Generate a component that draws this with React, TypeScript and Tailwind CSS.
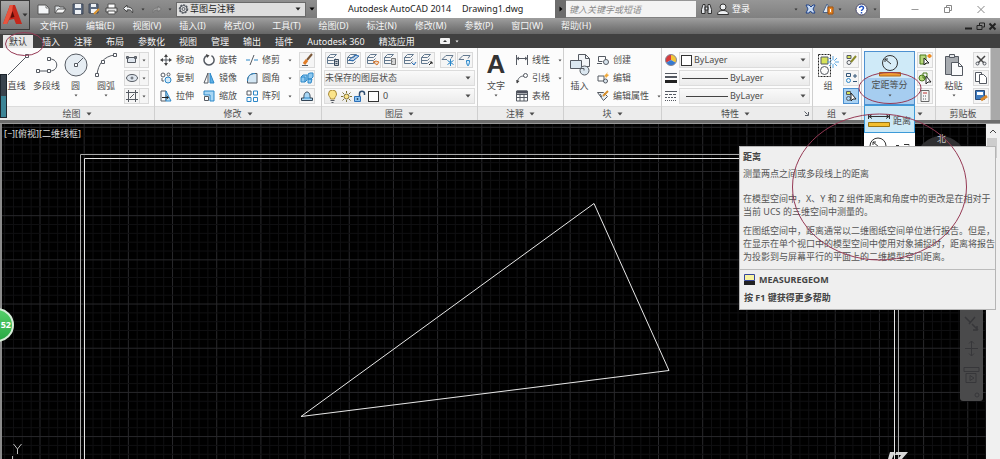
import type { ReactNode } from "react";

type IcProps = { w: number; h: number; children: ReactNode; className?: string };

const Ic = ({ w, h, children, className = "" }: IcProps) => (
  <svg
    width={w}
    height={h}
    viewBox={`0 0 ${w} ${h}`}
    fill="none"
    stroke="#555a62"
    strokeWidth="1"
    className={`shrink-0 ${className}`}
    aria-hidden="true"
  >
    {children}
  </svg>
);

const Arrow = ({ className = "" }: { className?: string }) => (
  <Ic w={6} h={4} className={className}>
    <path d="M0.5 0.5h5L3 3.5z" fill="currentColor" stroke="none" />
  </Ic>
);

const Dot = () => (
  <Ic w={4} h={3}>
    <path d="M0.5 0.5h3L2 2.5z" fill="currentColor" stroke="none" />
  </Ic>
);

/* ---------- title bar ---------- */

const quickTools = [
  {
    label: "新建",
    icon: (
      <Ic w={13} h={12}>
        <path d="M1 2h8l3 3v6H1z" fill="#f4f6f8" stroke="#555" />
        <path d="M9 2v3h3" stroke="#777" />
      </Ic>
    ),
  },
  {
    label: "打开",
    icon: (
      <Ic w={13} h={12}>
        <path d="M1 10V3h4l1 1h4v2" fill="#dfe3e6" stroke="#555" />
        <path d="M1 10l3-4h8l-3 4z" fill="#f8f8f8" stroke="#555" />
      </Ic>
    ),
  },
  {
    label: "保存",
    icon: (
      <Ic w={12} h={12}>
        <path d="M1 1h10v10H1z" fill="#5d6b80" stroke="#3e4654" />
        <path d="M3 1h6v4H3zM3 7h6v4H3z" fill="#eef1f5" stroke="none" />
      </Ic>
    ),
  },
  {
    label: "另存为",
    icon: (
      <Ic w={13} h={12}>
        <path d="M1 1h9v9H1z" fill="#5d6b80" stroke="#3e4654" />
        <path d="M3 1h5v3H3zM3 6h6v4H3z" fill="#eef1f5" stroke="none" />
        <path d="M6 11l5-5" stroke="#d9912c" strokeWidth="2" />
      </Ic>
    ),
  },
  {
    label: "打印",
    icon: (
      <Ic w={13} h={12}>
        <path d="M3 5V1h7v4" fill="#fff" stroke="#555" />
        <path d="M1 5h11v4H1z" fill="#e3e3e3" stroke="#444" />
        <path d="M3 8h7v3H3z" fill="#fff" stroke="#555" />
      </Ic>
    ),
  },
  {
    label: "放弃",
    icon: (
      <Ic w={13} h={12}>
        <path d="M5 2L1.500 5.500 5 9V7c3-.5 4.500 0 5.500 3 1-3.500-1-6-5.500-6z" fill="#eceef0" stroke="#444" />
      </Ic>
    ),
  },
];

const TitleBar = () => (
  <div className="flex h-[18px] items-stretch bg-white">
    <div className="flex w-[287px] shrink-0 items-center bg-gradient-to-b from-[#8f8f8f] to-[#7b7b7b] pl-[5px] text-[#333]">
      {quickTools.map((t) => (
        <button key={t.label} aria-label={t.label} className="flex w-[17px] justify-center">
          {t.icon}
        </button>
      ))}
      <button aria-label="放弃列表" className="flex w-3 justify-center"><Dot /></button>
      <button aria-label="重做" className="flex w-[15px] justify-center">
        <Ic w={12} h={12}>
          <path d="M7 3l3.500 3L7 9V7C4 7 3 7.500 2 10c-.500-3.500 1-5 5-5z" fill="#a7a7a7" stroke="#777" />
        </Ic>
      </button>
      <button aria-label="重做列表" className="flex w-3 justify-center"><Dot /></button>
      <label className="flex h-[15px] w-[130px] items-center border border-[#6a6a6a] bg-[#dedede] pr-1 pl-px text-[#222]">
        <Ic w={11} h={12}>
          <circle cx="5.500" cy="6" r="4" strokeDasharray="2 1" strokeWidth="1.500" />
          <circle cx="5.500" cy="6" r="3.500" />
          <circle cx="5.500" cy="6" r="1.500" />
        </Ic>
        <select aria-label="工作空间" className="ml-px flex-1 appearance-none bg-transparent leading-3 outline-none">
          <option>草图与注释</option>
        </select>
        <Arrow />
      </label>
      <button aria-label="自定义快速访问工具栏" className="flex flex-1 justify-center text-black"><Arrow /></button>
    </div>
    <h1 className="flex w-[238px] flex-auto items-center gap-[11px] pl-[31px] leading-[18px] whitespace-pre text-[#222]">
      <span>Autodesk AutoCAD 2014</span>
      <span>Drawing1.dwg</span>
    </h1>
    <div className="flex w-[325px] shrink-0 items-center bg-gradient-to-b from-[#969696] to-[#808080] text-[#333]">
      <button aria-label="展开搜索" className="flex h-full w-[11px] items-center justify-center bg-[#6c6c6c]">
        <Ic w={4} h={6}><path d="M0.500 0.500v5L3.500 3z" fill="#000" stroke="none" /></Ic>
      </button>
      <input
        aria-label="搜索"
        placeholder="键入关键字或短语"
        className="h-[16px] w-[130px] bg-[#f3f3f3] pl-[3px] italic outline-none placeholder:text-[#888]"
      />
      <button aria-label="查找" className="ml-[4px] flex">
        <Ic w={13} h={12}>
          <path d="M1.500 10.500v-4l1.500-5h2v9zM11.500 10.500v-4l-1.500-5H8v9zM5 4h3v3H5z" fill="#e3e6ea" stroke="#333" />
        </Ic>
      </button>
      <button className="ml-[4px] flex items-center gap-[3px] leading-4 text-white">
        <Ic w={12} h={12}>
          <circle cx="6" cy="4" r="3" fill="#eef0f2" stroke="#333" />
          <path d="M0.500 11.500c0-3 2.500-4 5.500-4s5.500 1 5.500 4z" fill="#eef0f2" stroke="#333" />
        </Ic>
        登录
      </button>
      <span className="ml-[44px]"><Dot /></span>
      <button aria-label="Exchange" className="ml-[7px] flex">
        <Ic w={11} h={10}>
          <path d="M1 1h3l2 2 2-2h2L8 5l2 4H7L5.500 7 4 9H1l2-4z" fill="#c9dcf5" stroke="#22448a" />
        </Ic>
      </button>
      <button aria-label="保持连接" className="ml-[6px] flex items-center gap-[3px]">
        <Ic w={13} h={12}>
          <path d="M1 9.500h5v-7L5 1 1 9.500z" fill="#dfe8f3" stroke="#4b6488" />
          <path d="M6 4h5v7H6z" fill="#e78524" stroke="#a0500b" />
          <path d="M8.500 6v3" stroke="#fff" />
        </Ic>
        <Dot />
      </button>
      <button aria-label="帮助" className="ml-[13px] flex items-center gap-[5px]">
        <Ic w={13} h={13}>
          <circle cx="6.500" cy="6.500" r="5.500" fill="#fff" stroke="#446" />
          <path d="M4.500 5c0-2.500 4-2.500 4 0 0 1.500-2 1.500-2 3M6.500 9v1.500" stroke="#1d4fc0" strokeWidth="1.500" />
        </Ic>
        <Dot />
      </button>
    </div>
    <div className="flex w-[120px] shrink-0 items-center justify-end gap-[23px] pr-[14px]">
      <button aria-label="最小化"><Ic w={10} h={9}><path d="M1.500 4.500h7" stroke="#999" /></Ic></button>
      <button aria-label="向下还原">
        <Ic w={10} h={9}><path d="M1.500 2.500h5v5h-5zM3.500 2.500v-2h5v5h-2" stroke="#888" /></Ic>
      </button>
      <button aria-label="关闭"><Ic w={10} h={9}><path d="M1.500 1l7 7M8.500 1l-7 7" stroke="#888" /></Ic></button>
    </div>
  </div>
);

const menus = [
  "文件(F)", "编辑(E)", "视图(V)", "插入(I)", "格式(O)", "工具(T)",
  "绘图(D)", "标注(N)", "修改(M)", "参数(P)", "窗口(W)", "帮助(H)",
];

const MenuBar = () => (
  <nav className="flex h-[16px] items-center justify-between pr-[3px] pl-[10px] text-[#f4f4f4]">
    <div className="flex gap-[18px] leading-4">
      {menus.map((m) => (
        <button key={m}>{m}</button>
      ))}
    </div>
    <div className="flex gap-[3px]">
      <button aria-label="最小化图形"><Ic w={9} h={9}><path d="M1 6.500h7" stroke="#222" strokeWidth="2" /></Ic></button>
      <button aria-label="还原图形">
        <Ic w={9} h={9}><path d="M1 3.500h5v4H1zM3.500 3V1h5v4H6.500" stroke="#222" /></Ic>
      </button>
      <button aria-label="关闭图形"><Ic w={9} h={9}><path d="M1.500 1.500l6 6M7.500 1.500l-6 6" stroke="#222" strokeWidth="2" /></Ic></button>
    </div>
  </nav>
);

const tabs = ["插入", "注释", "布局", "参数化", "视图", "管理", "输出", "插件", "Autodesk 360", "精选应用"];

const TabBar = () => (
  <div role="tablist" className="flex h-[14px] items-end bg-[#404040] pl-[3px] leading-[13px] text-[#f2f2f2]">
    <button role="tab" aria-selected="true" className="h-[13px] w-[30px] bg-[#e6e6e6] text-[#333]">
      默认
    </button>
    <div className="ml-[9px] flex gap-[14px]">
      {tabs.map((t) => (
        <button key={t} role="tab" aria-selected="false" className="whitespace-nowrap">
          {t}
        </button>
      ))}
    </div>
    <button aria-label="最小化选项卡" className="mb-[4px] ml-[25px] flex items-center gap-[5px]">
      <Ic w={10} h={6}>
        <rect width="10" height="6" rx="1" fill="#f2f2f2" stroke="none" />
        <path d="M3 4h4L5 2z" fill="#333" stroke="none" />
      </Ic>
      <Dot />
    </button>
  </div>
);

/* ---------- ribbon building blocks ---------- */

type PanelProps = { title?: string; label?: string; children: ReactNode; arrow?: boolean; launcher?: boolean };

const Panel = ({ title, label, children, arrow = true, launcher = false }: PanelProps) => (
  <section aria-label={label ?? title} className="flex min-w-0 flex-col border-r border-[#cfcfcf] bg-[#fcfcfc]">
    <div className="flex h-[58px] pt-[3px]">{children}</div>
    <div
      className={`flex h-[14px] items-center gap-[5px] border-t border-[#dcdcdc] bg-[#ececec] leading-3 ${
        title ? "justify-center" : "justify-end pr-[12px]"
      }`}
    >
      {launcher && <span className="flex-1" />}
      {title}
      {arrow && <Arrow />}
      {launcher && (
        <span className="flex flex-1 justify-end pr-[3px]">
          <Ic w={5} h={5}><path d="M0.500 0.500l3 3M4.500 1v3.500H1" /></Ic>
        </span>
      )}
    </div>
  </section>
);

type BigProps = { label: string; icon: ReactNode; arrow?: boolean; className: string };

const BigButton = ({ label, icon, arrow = false, className }: BigProps) => (
  <button className={`flex shrink-0 flex-col items-center ${className}`}>
    <span className="flex h-[27px] items-center">{icon}</span>
    <span className="leading-4 whitespace-nowrap">{label}</span>
    {arrow && <Dot />}
  </button>
);

type RowProps = { label: string; icon: ReactNode; arrow?: boolean };

const RowButton = ({ label, icon, arrow = false }: RowProps) => (
  <button className="flex h-[18px] items-center gap-1 whitespace-nowrap">
    {icon}
    {label}
    {arrow && <span className="ml-[4px]"><Dot /></span>}
  </button>
);

const SmallButton = ({ label, children, active = false }: { label: string; children: ReactNode; active?: boolean }) => (
  <button
    aria-label={label}
    className={`flex h-4 w-4 shrink-0 items-center justify-center border ${
      active ? "border-[#4d90d0] bg-[#a9d2f3]" : "border-[#dadada] bg-[#f5f5f5]"
    }`}
  >
    {children}
  </button>
);

const Column = ({ children, className = "" }: { children: ReactNode; className?: string }) => (
  <div className={`flex shrink-0 flex-col ${className}`}>{children}</div>
);

/* ---------- panels ---------- */

const shapes = [
  { label: "矩形", d: "M2.500 4.500h8v5h-8zM1.500 3.500h2v2h-2zM9.500 3.500h2v2h-2z" },
  { label: "椭圆", d: "M1.500 7a5.500 3.500 0 1 0 11 0a5.500 3.500 0 1 0-11 0M5.500 7h3M7 5.500v3" },
  { label: "图案填充", d: "M3.500 1v12M10.500 1v12M1 3.500h12M1 10.500h12M5 9l4-4" },
];

const DrawPanel = () => (
  <Panel title="绘图">
    <BigButton
      className="w-[33px]"
      label="直线"
      icon={<Ic w={24} h={24}><path d="M3 22L21 4" /><path d="M20.500 1.500h3v3h-3z" fill="#fff" /></Ic>}
    />
    <BigButton
      className="w-[27px]"
      label="多段线"
      icon={
        <Ic w={24} h={22}>
          <path d="M3 17h12c9 0 9-12 0-12" />
          <path d="M1.500 15.500h3v3h-3zM12.500 15.500h3v3h-3zM12.500 3.500h3v3h-3z" fill="#fff" />
        </Ic>
      }
    />
    <BigButton
      className="w-[31px]"
      label="圆"
      arrow
      icon={
        <Ic w={24} h={24}>
          <circle cx="12" cy="12" r="11" fill="#e6edf3" />
          <path d="M12 12l7-7" />
          <path d="M10.500 10.500h3v3h-3z" fill="#fff" />
        </Ic>
      }
    />
    <BigButton
      className="w-[30px]"
      label="圆弧"
      arrow
      icon={
        <Ic w={22} h={24}>
          <path d="M2 22C3 11 9 3 20 2" />
          <path d="M0.500 20.500h3v3h-3zM6.500 7.500h3v3h-3zM18.500 0.500h3v3h-3z" fill="#fff" />
        </Ic>
      }
    />
    <Column className="ml-[3px] gap-[2px] pt-px">
      {shapes.map((s) => (
        <div key={s.label} className="flex">
          <SmallButton label={s.label}>
            <Ic w={14} h={14}><path d={s.d} fill="#dfe6ee" /></Ic>
          </SmallButton>
          <button aria-label={`${s.label}选项`} className="flex w-[9px] items-center justify-center border border-l-0 border-[#dadada] bg-[#f5f5f5]">
            <Dot />
          </button>
        </div>
      ))}
    </Column>
  </Panel>
);

const ModifyPanel = () => (
  <Panel title="修改">
    <Column className="ml-[5px] w-[43px]">
      <RowButton label="移动" icon={<Ic w={12} h={12}><path d="M6 1v10M1 6h10" /><path d="M6 0l2 3H4zM6 12l2-3H4zM0 6l3-2v4zM12 6L9 4v4z" fill="#444" stroke="none" /></Ic>} />
      <RowButton label="复制" icon={<Ic w={12} h={12}><circle cx="3" cy="3" r="2" /><circle cx="8.500" cy="2.500" r="1.500" /><circle cx="8" cy="8" r="3" stroke="#2b87c8" fill="#d3eafa" /><path d="M2 6v3h2" /></Ic>} />
      <RowButton label="拉伸" icon={<Ic w={12} h={12}><path d="M1 1h5v10H1z" /><path d="M6 1l5 10H6z" fill="#bfe0f5" stroke="#2b87c8" /><path d="M2 7.500h6M6.500 6l2 1.500-2 1.500" stroke="#222" /></Ic>} />
    </Column>
    <Column className="w-[43px]">
      <RowButton label="旋转" icon={<Ic w={12} h={12}><path d="M4 1.500a5 5 0 1 0 4.500 0.200" strokeWidth="1.500" /><path d="M3 0l3.500 1.500L4 4z" fill="#444" stroke="none" /></Ic>} />
      <RowButton label="镜像" icon={<Ic w={12} h={12}><path d="M5 1v10H1z" /><path d="M7 1v10h4z" fill="#5eb1e6" stroke="#2b87c8" /></Ic>} />
      <RowButton label="缩放" icon={<Ic w={12} h={12}><path d="M1 1h10v10H7V5H1z" fill="#a8d6f4" stroke="#2b87c8" /><path d="M1.500 6.500h4v4h-4z" /></Ic>} />
    </Column>
    <Column className="w-[53px]">
      <RowButton arrow label="修剪" icon={<Ic w={12} h={12}><path d="M0 6h4M8 6h4" stroke="#2b87c8" /><path d="M4 11l4-10" /></Ic>} />
      <RowButton arrow label="圆角" icon={<Ic w={12} h={12}><path d="M1.500 11V9c0-5 3-7.500 7.500-7.500h2V11z" fill="#d4e7f4" /><path d="M1.500 9C1.500 4 4 1.500 9 1.500" stroke="#2b87c8" /></Ic>} />
      <RowButton arrow label="阵列" icon={<Ic w={12} h={12}><path d="M1 1h4v4H1z" /><path d="M7.500 1h4v4h-4zM1 7.500h4v4H1zM7.500 7.500h4v4h-4z" stroke="#2b87c8" /></Ic>} />
    </Column>
    <Column className="gap-[2px] pt-px">
      <SmallButton label="删除"><Ic w={14} h={14}><path d="M12 1L7 7" stroke="#7a5636" strokeWidth="2" /><path d="M7 7l-3 4" stroke="#e07c26" strokeWidth="3" /><path d="M2 12.500h6" /></Ic></SmallButton>
      <SmallButton label="分解"><Ic w={14} h={14}><path d="M1 6l2-2h4v5l-2 2H1zM1 6h4v5M8 3l2-1h3v4l-2 2H8zM8 8h4l-1 4H8z" stroke="#2b87c8" fill="#8fc9f0" /></Ic></SmallButton>
      <SmallButton label="偏移"><Ic w={14} h={14}><path d="M1.500 11.500h11V9H10C11 1 3 1 4 9H1.500z" fill="#a8d6f4" stroke="#345" /><path d="M4 9h6" stroke="#2b87c8" /></Ic></SmallButton>
    </Column>
  </Panel>
);

const layerTools = [
  { label: "图层特性", extra: "M8.500 6.500h4v6h-4zM9.500 8.500h2M9.500 10.500h2", color: "#3b4c5e", gap: "" },
  { label: "图层置为当前", extra: "M3 7l6-5 4 1-6 5z", color: "#2b6fb8", gap: "ml-[4px]" },
  { label: "匹配图层", extra: "M7 9l4 3 2-3-3-1z", color: "#d9772a", gap: "ml-[4px]" },
  { label: "上一个", extra: "M8.500 5.500h4v6h-4z", color: "#777777", gap: "ml-px" },
  { label: "隔离", extra: "M9 10l2 2 2-3", color: "#2b6fb8", gap: "ml-[4px]" },
  { label: "取消隔离", extra: "M9 12l3-3M10 9h2v2", color: "#222222", gap: "ml-px" },
];

/* freeze / turn off: a single sheet with a blue mark under it */
const layerStates = [
  { label: "冻结", extra: "M9.500 6v7M6.500 7.500l6 4M12.500 7.500l-6 4", gap: "ml-[5px]" },
  { label: "关闭图层", extra: "M8.500 7.500h3v2l-1 3h-1l-1-3z", gap: "ml-px" },
];

const comboBox = "flex h-4 items-center border border-[#dcdcdc] bg-gradient-to-b from-[#fafafa] to-[#ebebeb] pr-[3px]";
const comboSelect = "min-w-0 flex-1 appearance-none bg-transparent leading-3 outline-none";

const LayerPanel = () => (
  <Panel title="图层">
    <Column className="w-full flex-1 gap-[2px] px-[2px] pt-px">
      <div className="flex pl-px">
        {layerTools.map((t) => (
          <div key={t.label} className={t.gap}>
            <SmallButton label={t.label}>
              <Ic w={14} h={14}>
                <path d="M1.500 4.500l3-3h6l-3 3zM1.500 7.500h6l2-2M1.500 10.500h6l2-2M1.500 4.500v6" stroke="#62788e" />
                <path d={t.extra} stroke={t.color} fill={t.color} fillOpacity="0.250" />
              </Ic>
            </SmallButton>
          </div>
        ))}
        {layerStates.map((t) => (
          <div key={t.label} className={t.gap}>
            <SmallButton label={t.label}>
              <Ic w={14} h={14}>
                <path d="M1 6.500l4-4h7l-2 3M1 6.500h5" stroke="#62788e" />
                <path d={t.extra} stroke="#2b87c8" fill="#cfe8fa" />
              </Ic>
            </SmallButton>
          </div>
        ))}
      </div>
      <div className={comboBox}>
        <select aria-label="图层状态" className={comboSelect}>
          <option>未保存的图层状态</option>
        </select>
        <Arrow />
      </div>
      <div className={comboBox}>
        <Ic w={13} h={13} className="ml-px">
          <path d="M4.500 9c0-2-2-2.500-2-5a4 4 0 0 1 8 0c0 2.500-2 3-2 5z" fill="#fbe48a" stroke="#a98a3a" />
          <path d="M4.500 10.500h4M5.500 12.500h2" />
        </Ic>
        <Ic w={13} h={13} className="ml-px">
          <circle cx="6.500" cy="6.500" r="2.500" fill="#fbe48a" stroke="#7d7236" />
          <path d="M6.500 1v2M6.500 10v2M1 6.500h2M10 6.500h2M2.500 2.500L4 4M9 9l1.500 1.500M10.500 2.500L9 4M4 9l-1.500 1.500" stroke="#7d7236" />
        </Ic>
        <Ic w={13} h={13}>
          <path d="M1.500 6.500h6v5h-6z" fill="#8cc3ee" stroke="#2b6fb8" />
          <path d="M6.500 6V3.500c0-3 5-3 5 0V5M4.500 8v2" stroke="#2f4d70" strokeWidth="1.500" />
        </Ic>
        <span className="ml-[2px] size-[11px] shrink-0 border border-[#333] bg-white" />
        <select aria-label="图层" className={`${comboSelect} ml-[4px]`}>
          <option>0</option>
        </select>
        <Arrow />
      </div>
    </Column>
  </Panel>
);

const AnnotatePanel = () => (
  <Panel title="注释">
    <BigButton
      className="w-[36px]"
      label="文字"
      arrow
      icon={
        <span className="[font-family:'Liberation_Sans',sans-serif] text-[26px] leading-[27px] font-bold text-[#333]">A</span>
      }
    />
    <Column className="ml-[2px]">
      <RowButton arrow label="线性" icon={<Ic w={12} h={12}><path d="M0.500 1v10M11.500 1v10M1 4.500h10M3 3L1 4.500 3 6M9 3l2 1.500L9 6" /></Ic>} />
      <RowButton arrow label="引线" icon={<Ic w={12} h={12}><path d="M1 11c1-5 3-7 7-7" /><circle cx="9.500" cy="3.500" r="2" /><path d="M0 8l1 3.500L3.500 9z" fill="#444" stroke="none" /></Ic>} />
      <RowButton label="表格" icon={<Ic w={12} h={12}><path d="M0.500 1h11v10H0.500zM0.500 4.500h11M0.500 7.500h11M4 4v7M8 4v7" /><path d="M1 1h10v2H1z" fill="#445" /></Ic>} />
    </Column>
  </Panel>
);

const BlockPanel = () => (
  <Panel title="块">
    <BigButton
      className="w-[31px]"
      label="插入"
      icon={
        <Ic w={22} h={24}>
          <path d="M9.500 1.500h7l4 4v8h-11z" fill="#f2f5f8" />
          <path d="M16.500 1.500v4h4" />
          <path d="M1.500 7.500h11v8h-11z" fill="#dbe7f0" />
          <circle cx="15.500" cy="17.500" r="4.500" fill="#dbe7f0" />
          <path d="M10 15.500h5v2" />
        </Ic>
      }
    />
    <Column className="ml-[2px]">
      <RowButton label="创建" icon={<Ic w={12} h={12}><path d="M1.500 7.500v-5h7v3M1.500 7.500h4" /><circle cx="9" cy="8" r="2.500" fill="#dbe7f0" /><path d="M0 9.500h5" /></Ic>} />
      <RowButton label="编辑" icon={<Ic w={12} h={12}><path d="M1 4h6v5H1z" /><circle cx="8.500" cy="9" r="2" fill="#dbe7f0" /><path d="M11 0L7 4l2 1-1 2 4-4-2-1z" fill="#f0a838" stroke="none" /></Ic>} />
      <RowButton arrow label="编辑属性" icon={<Ic w={12} h={12}><path d="M0.500 2.500h6l4 4-4 4z" fill="#e8eef3" /><path d="M11 1L6 6" stroke="#d9912c" strokeWidth="2" /><path d="M3 4l2 3" /></Ic>} />
    </Column>
  </Panel>
);

const PropertiesPanel = () => (
  <Panel title="特性" launcher>
    <Column className="w-full flex-1 gap-[2px] pr-[2px] pl-[3px] pt-px">
      <div className="flex items-center gap-[2px]">
        <Ic w={12} h={12}>
          <path d="M6 6V0.500A5.500 5.500 0 0 0 1.200 8.700z" fill="#d83a3a" stroke="none" />
          <path d="M6 6V0.500a5.500 5.500 0 0 1 4.800 8.200z" fill="#f2c536" stroke="none" />
          <path d="M6 6L1.200 8.700a5.500 5.500 0 0 0 9.600 0z" fill="#3579d0" stroke="none" />
          <circle cx="6" cy="6" r="5.500" stroke="#889" />
        </Ic>
        <div className={`${comboBox} flex-1`}>
          <span className="ml-px size-[11px] shrink-0 border border-[#333] bg-white" />
          <select aria-label="对象颜色" className={`${comboSelect} ml-[2px]`}>
            <option>ByLayer</option>
          </select>
          <Arrow />
        </div>
      </div>
      <div className="flex items-center gap-[2px]">
        <Ic w={12} h={12}><path d="M0 1.500h12" /><path d="M0 5h12" strokeWidth="2" /><path d="M0 9.500h12" stroke="#222" strokeWidth="3" /></Ic>
        <div className={`${comboBox} flex-1`}>
          <span className="ml-[2px] h-px w-[46px] shrink-0 bg-[#444]" />
          <select aria-label="线宽" className={`${comboSelect} ml-[2px]`}>
            <option>ByLayer</option>
          </select>
          <Arrow />
        </div>
      </div>
      <div className="flex items-center gap-[2px]">
        <Ic w={12} h={12}><path d="M0 1.500h12" /><path d="M0 4.500h12" strokeDasharray="3 1" /><path d="M0 7.500h12" strokeDasharray="2 1" /><path d="M0 10.500h12" strokeDasharray="1 1" /></Ic>
        <div className={`${comboBox} flex-1`}>
          <span className="ml-[6px] h-px w-[42px] shrink-0 bg-[#444]" />
          <select aria-label="线型" className={`${comboSelect} ml-[2px]`}>
            <option>ByLayer</option>
          </select>
          <Arrow />
        </div>
      </div>
    </Column>
  </Panel>
);

const GroupPanel = () => (
  <Panel title="组">
    <BigButton
      className="w-[30px]"
      label="组"
      icon={
        <Ic w={24} h={24}>
          <path d="M2.500 1.500h12v22h-12z" strokeDasharray="2 1" stroke="#222" />
          <path d="M5 4h7v7H5z" fill="#d6e25a" />
          <circle cx="8.500" cy="17.500" r="4" />
          <path d="M17 3v12M11 9h12M13 5l8 8M21 5l-8 8" stroke="#5aa6e0" />
          <circle cx="17" cy="9" r="2" fill="#fff" stroke="none" />
        </Ic>
      }
    />
    <Column className="gap-[2px] pt-px">
      <SmallButton label="解除编组"><Ic w={14} h={14}><path d="M3 2.500h4v3H3z" fill="#d6e25a" /><circle cx="5" cy="9.500" r="2" /><path d="M12 3L7 9" stroke="#8a8a2a" strokeWidth="2" /></Ic></SmallButton>
      <SmallButton label="组编辑"><Ic w={14} h={14}><path d="M2.500 2.500h4v3h-4zM9 5h4M11 3v4M9 10.500h4" stroke="#357" /><circle cx="4.500" cy="9.500" r="2" stroke="#2b87c8" /></Ic></SmallButton>
      <SmallButton label="启用组选择" active><Ic w={14} h={14}><path d="M2.500 2.500h4v3h-4z" fill="#d6e25a" /><circle cx="4.500" cy="9.500" r="2" /><path d="M7 4v8l2-2h3z" fill="#fff" stroke="#222" /></Ic></SmallButton>
    </Column>
  </Panel>
);

const UtilitiesPanel = () => (
  <Panel label="实用工具">
    <div className="relative ml-[2px] w-[51px] shrink-0">
      <button className="flex h-[54px] w-full flex-col items-center border border-[#4d90d0] bg-gradient-to-b from-[#cfeaf8] from-50% to-[#a6cdf0] to-50%">
        <span className="flex h-[25px] items-end">
          <Ic w={22} h={23}>
            <circle cx="11" cy="9" r="7.500" fill="#d8edf8" stroke="#333" />
            <path d="M12 10L6 5M6 8V5h3" stroke="#333" />
            <path d="M0.500 18.500h21v3.500h-21z" fill="#ee9b32" stroke="#b76a14" />
          </Ic>
        </span>
        <span className="leading-4">定距等分</span>
        <span className="mt-px"><Dot /></span>
      </button>
      <ul className="absolute top-[54px] left-0 z-10 h-[41px] w-full overflow-hidden bg-white">
        <li>
          <button className="flex h-[28px] w-full items-center gap-[3px] border border-[#3c9ad8] bg-[#cbe8f6] pt-[3px] pl-[3px] whitespace-nowrap">
            <Ic w={22} h={16}>
              <path d="M0.500 1v5M21.500 1v5M1 3.500h20M4 1.500L1 3.500l3 2M18 1.500l3 2-3 2" stroke="#333" />
              <path d="M0.500 9.500h21v4h-21z" fill="#f3bf2f" stroke="#9a7412" />
            </Ic>
            距离
          </button>
        </li>
        <li>
          <button aria-label="半径" className="flex w-full pt-[4px] pl-[5px]">
            <Ic w={44} h={18}>
              <circle cx="9" cy="9" r="8" stroke="#333" />
              <path d="M10 10L4 5M4 8V5h3" stroke="#333" />
              <path d="M27 8.500h3M35 7.500h5v1" stroke="#333" />
            </Ic>
          </button>
        </li>
      </ul>
    </div>
    <Column className="ml-[2px] gap-[2px] pt-px">
      <SmallButton label="快速选择"><Ic w={14} h={14}><path d="M2 2h6v9H2z" fill="#b6d77a" stroke="#4d7a1d" /><path d="M6 5v7l2-2h3z" fill="#fff" stroke="#222" /><path d="M11.500 1v4M9.500 3h4" stroke="#ee8a20" strokeWidth="2" /></Ic></SmallButton>
      <SmallButton label="全部选择"><Ic w={14} h={14}><circle cx="4" cy="7" r="3" fill="#b6d77a" stroke="#4d7a1d" /><path d="M5 2h4v5H5z" stroke="#4d7a1d" /><path d="M8 5v8l2-2h3z" fill="#fff" stroke="#222" /></Ic></SmallButton>
      <SmallButton label="快速计算器"><Ic w={14} h={14}><path d="M3 1.500h8v11H3z" fill="#f5f5f5" stroke="#666" /><path d="M5 4h4" stroke="#b33" /><path d="M5 7h4M5 10h4" strokeDasharray="1 1" /></Ic></SmallButton>
    </Column>
  </Panel>
);

const ClipboardPanel = () => (
  <Panel title="剪贴板" arrow={false}>
    <BigButton
      className="w-[35px]"
      label="粘贴"
      arrow
      icon={
        <Ic w={22} h={24}>
          <path d="M2.500 3.500h13v18h-13z" fill="#a7abb0" />
          <path d="M6.500 1.500h5v3h-5z" fill="#e2e5e8" />
          <path d="M8.500 9.500h7l4 4v9h-11z" fill="#fafbfc" />
          <path d="M15.500 9.500v4h4" />
        </Ic>
      }
    />
    <Column className="ml-[2px] gap-[2px] pt-px">
      <SmallButton label="剪切"><Ic w={14} h={14}><path d="M3 3l7 7M11 3l-7 7" stroke="#444" strokeWidth="1.500" /><circle cx="3.500" cy="10.500" r="1.500" /><circle cx="10.500" cy="10.500" r="1.500" /></Ic></SmallButton>
      <SmallButton label="复制剪裁"><Ic w={14} h={14}><path d="M1.500 1.500h6v9h-6z" fill="#fff" /><path d="M5.500 3.500h4l3 3v6h-7z" fill="#fff" /></Ic></SmallButton>
      <SmallButton label="特性匹配"><Ic w={14} h={14}><path d="M1.500 1.500h9v9h-9z" fill="#3f7cc0" stroke="#2a4a78" /><path d="M3 3h6v3H3z" fill="#fff" stroke="none" /><path d="M7 11l6-4" stroke="#d8862a" strokeWidth="3" /></Ic></SmallButton>
    </Column>
  </Panel>
);

const Ribbon = () => (
  <div className="grid h-[72px] grid-cols-[155fr_167fr_156fr_86fr_98fr_151fr_49fr_74fr_55fr_9px] text-[#4c4c4c]">
    <DrawPanel />
    <ModifyPanel />
    <LayerPanel />
    <AnnotatePanel />
    <BlockPanel />
    <PropertiesPanel />
    <GroupPanel />
    <UtilitiesPanel />
    <ClipboardPanel />
    <div className="bg-[#a9a9a9]" />
  </div>
);

/* ---------- drawing area ---------- */

const STEP = 44.18;

const gridLines = (count: number, start: number) =>
  Array.from({ length: count }, (_, i) => ({ pos: start + (i * STEP) / 5, major: i % 5 === 0 }));

const columns = gridLines(125, 40 - STEP);
const rows = gridLines(60, 47.500 - STEP);

const Drawing = () => (
  <svg
    role="img"
    aria-label="图形"
    viewBox="2 0 984 335"
    preserveAspectRatio="xMinYMin slice"
    className="absolute inset-0 h-full w-full"
    fill="none"
  >
    {columns.map((c) => (
      <path key={c.pos} d={`M${c.pos} 0v335`} stroke={c.major ? "#29292c" : "#101012"} />
    ))}
    {rows.map((r) => (
      <path key={r.pos} d={`M0 ${r.pos}h986`} stroke={r.major ? "#29292c" : "#101012"} />
    ))}
    <path d="M80.500 335V30.500h818V335" stroke="#a8a8a8" />
    <path d="M84.500 335V34.500h810V335" stroke="#e6e6e6" />
    <path d="M594 79.500l75 167-368 46z" stroke="#e8e8e8" />
    <path d="M13.500 320l4 5 4-5M17.500 325v5M12.500 332v3" stroke="#bdbdbd" />
    <circle cx="941" cy="37" r="25" fill="#303032" />
    <path d="M890 328h5l-3 7h-4zM896 328h12l-6 7h-4l3-4h-6z" fill="#d8d8d8" />
  </svg>
);

const NavBar = () => (
  <div className="absolute top-[60px] right-[17px] flex h-[217px] w-[23px] flex-col items-center justify-end gap-[9px] rounded-[3px] bg-[#4a4a4b] pb-[3px]">
    <Ic w={15} h={15}><path d="M1 1l5 5M11 1L5 8M8 8l6 6M13 10v4H9" stroke="#37373a" strokeWidth="1.500" /></Ic>
    <Ic w={15} h={17}><path d="M7.500 1v15M1 8.500h13M5 3.500L7.500 1 10 3.500M5 13.500l2.500 2.500 2.500-2.500" stroke="#37373a" /></Ic>
    <Ic w={17} h={17}><path d="M1 1.500h15v4H1zM3 7.500h10v9H3zM7 9.500v5l4-2.500z" stroke="#37373a" /></Ic>
    <Ic w={17} h={6}><circle cx="14" cy="3" r="2" stroke="#37373a" /></Ic>
  </div>
);

const Tooltip = () => (
  <div
    role="tooltip"
    className="absolute top-[22px] right-[4px] z-20 h-[164px] w-[257px] border border-[#b5b5b5] bg-[#efefef] leading-[13px] whitespace-nowrap text-[#555]"
  >
    <div className="px-[3px] pt-[3px]">
      <p className="font-bold text-[#444]">距离</p>
      <p className="mt-[4px]">测量两点之间或多段线上的距离</p>
      <p className="mt-[12px]">
        在模型空间中，X、Y 和 Z 组件距离和角度中的更改是在相对于
        <br />
        当前 UCS 的三维空间中测量的。
      </p>
      <p className="mt-[6px]">
        在图纸空间中，距离通常以二维图纸空间单位进行报告。但是，
        <br />
        在显示在单个视口中的模型空间中使用对象捕捉时，距离将报告
        <br />
        为投影到与屏幕平行的平面上的二维模型空间距离。
      </p>
    </div>
    <div className="mt-[6px] border-t border-[#bcbcbc] px-[4px] pt-[3px] font-bold text-[#444]">
      <p className="flex items-center gap-[4px]">
        <Ic w={11} h={11}>
          <path d="M0.500 0.500h10v6h-10z" fill="#f8f3a2" stroke="#35469a" />
          <path d="M0 7h11v4H0z" fill="#222" stroke="none" />
        </Ic>
        MEASUREGEOM
      </p>
      <p className="mt-[5px]">按 F1 键获得更多帮助</p>
    </div>
  </div>
);

const Canvas = () => (
  <main className="relative flex min-h-[335px] flex-1">
    <div className="relative flex-1 overflow-hidden border-l-2 border-[#8a8a8a] bg-black">
      <Drawing />
      <p className="relative pt-[3px] pl-[2px] leading-[14px] text-[#dcdcdc]">[−][俯视][二维线框]</p>
      <span className="absolute top-[9px] right-[40px] leading-3 text-[#c4c4c4]">北</span>
    </div>
    <div className="w-[14px] shrink-0 bg-[#f0f0f0] px-px">
      <button aria-label="向上滚动" className="flex h-[14px] w-full items-center justify-center">
        <Ic w={8} h={5}><path d="M1 4l3-3 3 3" stroke="#444" /></Ic>
      </button>
      <div className="h-[20px] w-[10px] bg-[#cdcdcd]" />
    </div>
    <NavBar />
    <Tooltip />
    <div className="absolute top-[184px] -left-5 flex size-[34px] items-center justify-end rounded-full border-2 border-[#d6ecd8] bg-gradient-to-b from-[#55d06a] to-[#27a844] pr-px font-bold text-white">
      52
    </div>
  </main>
);

/* red pen circles drawn over the window */
const Marks = () => (
  <svg
    width="1000"
    height="262"
    viewBox="0 0 1000 262"
    fill="none"
    stroke="#963a55"
    className="pointer-events-none absolute top-0 left-0 z-30"
    aria-hidden="true"
  >
    <ellipse cx="24.500" cy="44" rx="19" ry="11.500" />
    <ellipse cx="890" cy="88" rx="31" ry="15.500" />
    <ellipse cx="879.500" cy="187" rx="87" ry="73" />
  </svg>
);

export default function App() {
  return (
    <div className="relative flex min-h-screen flex-col overflow-hidden bg-[#777] [font-family:'Noto_Sans','Noto_Sans_CJK_SC',sans-serif] text-[9px]">
      <header className="flex bg-gradient-to-b from-[#a2a2a2] from-50% to-[#666]">
        <button aria-label="应用程序菜单" className="flex h-[30px] w-[30px] shrink-0 items-center border border-[#3a3a3a] bg-gradient-to-b from-[#a8a8a8] to-[#777] pl-[2px] text-[#333]">
          <Ic w={19} h={22}>
            <path d="M7 1h5l7 19h-6l-2-5-5 1-2 4H0z" fill="#c4281c" stroke="none" />
            <path d="M7 1h3l-1 7-5 12H0z" fill="#e8553f" stroke="none" />
            <path d="M9.500 7l2 6-4 1z" fill="#5a0d08" stroke="none" />
          </Ic>
          <Arrow />
        </button>
        <div className="min-w-0 flex-1">
          <TitleBar />
          <MenuBar />
        </div>
      </header>
      <TabBar />
      <Ribbon />
      <div className="h-[4px] border-b border-[#999] bg-[#6d6d6d]" />
      <Canvas />
      <div className="absolute top-[74px] left-0 h-[44px] w-[7px] border border-[#1c242c] bg-gradient-to-b from-[#39434d] from-50% to-[#3b8496] to-50%" />
      <Marks />
    </div>
  );
}
